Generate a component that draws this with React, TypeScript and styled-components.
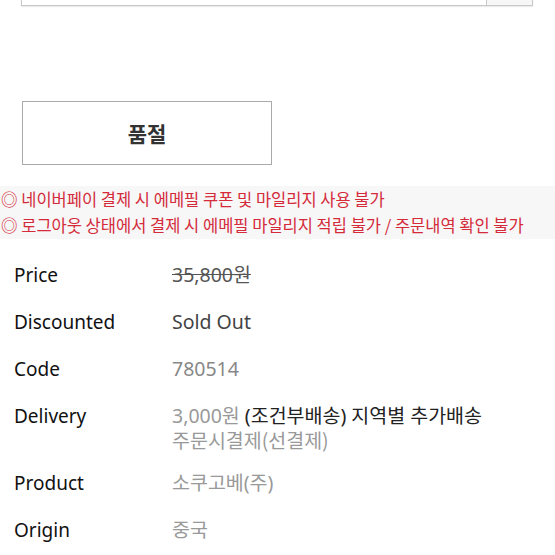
import * as React from "react";
import styled, { createGlobalStyle } from "styled-components";

const GlobalStyle = createGlobalStyle`
  html, body {
    margin: 0;
    padding: 0;
    background: #fff;
  }
  body {
    font-family: "Noto Sans", "Noto Sans CJK KR", sans-serif;
    overflow: hidden;
  }
`;

const Page = styled.div`
  width: 555px;
  height: 555px;
  overflow: hidden;
  display: flex;
  flex-direction: column;

  & > * {
    flex-shrink: 0;
  }
`;

const SelectBar = styled.div`
  display: flex;
  margin: -31px 0 0 21px;
  width: 510px;
  height: 35px;
  border: 1px solid #c8c8c8;
  box-shadow: 0 1px 1px rgba(0, 0, 0, 0.08);
`;

const SelectField = styled.div`
  flex: 1;
  border-right: 1px solid #c8c8c8;
`;

const SelectButton = styled.div`
  width: 45px;
  background: #f6f6f6;
`;

const SoldOutButton = styled.div`
  margin: 95px 0 0 22px;
  width: 248px;
  height: 62px;
  border: 1px solid #aaa;
  display: flex;
  align-items: center;
  justify-content: center;
  font-family: "Noto Sans CJK KR", sans-serif;
  font-size: 21px;
  font-weight: 700;
  color: #333;
`;

const Notice = styled.div`
  margin-top: 21px;
  background: #f7f7f7;
  padding: 0 0 1px 1px;
`;

const NoticeLine = styled.div`
  font-family: "Noto Sans CJK KR", sans-serif;
  font-size: 16.5px;
  line-height: 26px;
  color: #d42a3a;
  white-space: nowrap;
`;

const InfoTable = styled.div`
  display: flex;
  flex-direction: column;
  padding: 22px 0 0 14px;
`;

const InfoRow = styled.div<{ $tall?: boolean }>`
  display: grid;
  grid-template-columns: 158px 1fr;
  min-height: ${p => (p.$tall ? "67px" : "47px")};
  align-items: start;
`;

const Label = styled.div`
  font-size: 19px;
  line-height: 28px;
  color: #111;
`;

const Cell = styled.div`
  display: flex;
  flex-direction: column;
`;

const Value = styled.div<{ $tone: string }>`
  font-family: "Noto Sans", "Noto Sans CJK KR", sans-serif;
  font-size: 19.5px;
  line-height: 28px;
  color: ${p => p.$tone};
`;

const Strike = styled.div`
  font-size: 19.5px;
  line-height: 28px;
  color: #555;
  text-decoration: line-through;
`;

const Dark = styled.span`
  color: #222;
`;

const SubValue = styled.div`
  font-family: "Noto Sans CJK KR", sans-serif;
  font-size: 19.5px;
  line-height: 20px;
  color: #999;
`;

interface IRow {
  label: string;
  value: React.ReactNode;
  tall?: boolean;
}

const rows: IRow[] = [
  { label: "Price", value: <Strike>35,800원</Strike> },
  { label: "Discounted", value: <Value $tone="#444">Sold Out</Value> },
  { label: "Code", value: <Value $tone="#888">780514</Value> },
  {
    label: "Delivery",
    tall: true,
    value: (
      <>
        <Value $tone="#999">
          3,000원 <Dark>(조건부배송) 지역별 추가배송</Dark>
        </Value>
        <SubValue>주문시결제(선결제)</SubValue>
      </>
    )
  },
  { label: "Product", value: <Value $tone="#999">소쿠고베(주)</Value> },
  { label: "Origin", value: <Value $tone="#999">중국</Value> }
];

const App: React.FunctionComponent = () => (
  <Page>
    <GlobalStyle />
    <SelectBar>
      <SelectField />
      <SelectButton />
    </SelectBar>
    <SoldOutButton>품절</SoldOutButton>
    <Notice>
      <NoticeLine>◎ 네이버페이 결제 시 에메필 쿠폰 및 마일리지 사용 불가</NoticeLine>
      <NoticeLine>◎ 로그아웃 상태에서 결제 시 에메필 마일리지 적립 불가 / 주문내역 확인 불가</NoticeLine>
    </Notice>
    <InfoTable>
      {rows.map(row => (
        <InfoRow key={row.label} $tall={row.tall}>
          <Label>{row.label}</Label>
          <Cell>{row.value}</Cell>
        </InfoRow>
      ))}
    </InfoTable>
  </Page>
);

export default App;
